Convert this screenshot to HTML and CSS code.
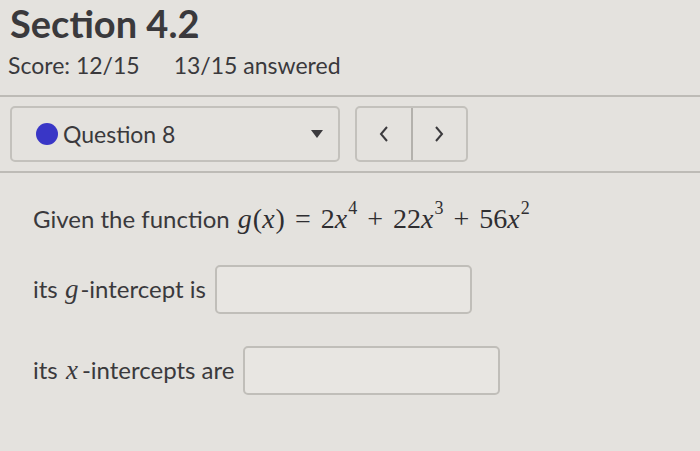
FILE: index.html
```html
<!DOCTYPE html>
<html lang="en">
<head>
    <meta charset="UTF-8">
    <meta name="viewport" content="width=device-width, initial-scale=1.0">
    <title>Section 4.2</title>
    <link rel="stylesheet" href="styles.css">
</head>
<body>
    <div class="header">
        <h1>Section 4.2</h1>
        <div class="score">
            <span>Score: 12/15</span>
            <span>13/15 answered</span>
        </div>
    </div>

    <div class="nav-bar">
        <div class="question-select">
            <span class="dot"></span>
            <span class="q-label">Question 8</span>
            <svg class="caret" width="14" height="10" viewBox="0 0 14 10"><path d="M1 1 L13 1 L7 9 Z" fill="#3b3a3d"/></svg>
        </div>
        <div class="arrows">
            <span class="arrow">
                <svg width="12" height="18" viewBox="0 0 12 18"><path d="M9 2 L3 9 L9 16" fill="none" stroke="#3b3a3d" stroke-width="2"/></svg>
            </span>
            <span class="arrow">
                <svg width="12" height="18" viewBox="0 0 12 18"><path d="M3 2 L9 9 L3 16" fill="none" stroke="#3b3a3d" stroke-width="2"/></svg>
            </span>
        </div>
    </div>

    <div class="question">
        <p class="prompt">Given the function <span class="math"><i>g</i>(<i>x</i>)<span class="op">=</span>2<i>x</i><sup>4</sup><span class="op">+</span>22<i>x</i><sup>3</sup><span class="op">+</span>56<i>x</i><sup>2</sup></span></p>

        <div class="answer-row">
            <span>its <i class="mvar">g</i>-intercept is</span>
            <span class="answer-box"></span>
        </div>

        <div class="answer-row">
            <span>its <i class="mvar wide">x</i>-intercepts are</span>
            <span class="answer-box"></span>
        </div>
    </div>
</body>
</html>
```

FILE: styles.css
```css
body {
    margin: 0;
    font-family: 'Lato', 'Open Sans', sans-serif;
    color: #3a393c;
    background: #e4e2de;
}
.header {
    padding: 0 10px;
    border-bottom: 2px solid #bdbbb6;
    height: 95px;
}
h1 {
    margin: 0;
    padding-top: 2px;
    font-size: 38px;
    font-weight: 700;
    line-height: 42px;
}
.score {
    display: flex;
    gap: 34px;
    font-size: 23px;
    margin-top: 7px;
    margin-left: -2px;
}
.nav-bar {
    display: flex;
    align-items: center;
    gap: 15px;
    padding: 8px 10px;
    height: 58px;
    border-bottom: 2px solid #bdbbb6;
}
.question-select {
    display: flex;
    align-items: center;
    width: 330px;
    height: 56px;
    box-sizing: border-box;
    border: 2px solid #c3c1bc;
    border-radius: 5px;
    padding: 0 14px 0 24px;
    font-size: 23px;
}
.dot {
    width: 22px;
    height: 22px;
    border-radius: 50%;
    background: #3936c6;
    margin-right: 5px;
}
.q-label {
    flex: 1;
}
.arrows {
    display: flex;
    width: 113px;
    height: 56px;
    box-sizing: border-box;
    border: 2px solid #c3c1bc;
    border-radius: 5px;
}
.arrow {
    flex: 1;
    display: flex;
    align-items: center;
    justify-content: center;
}
.arrow + .arrow {
    border-left: 2px solid #b3b1ac;
}
.question {
    padding: 0 33px;
}
.prompt {
    margin: 26px 0 0;
    font-size: 24px;
    line-height: 40px;
}
.math {
    font-family: 'Liberation Serif', 'Times New Roman', serif;
    font-size: 28px;
    color: #2f2e31;
    margin-left: 2px;
}
.math i {
    margin-right: 1px;
}
.math sup {
    font-size: 18px;
    vertical-align: 14px;
    line-height: 0;
}
.op {
    margin: 0 10px;
}
.mvar {
    font-family: 'Liberation Serif', serif;
    font-size: 27px;
    margin: 0 2px 0 1px;
}
.mvar.wide {
    margin: 0 4px 0 2px;
}
.answer-row {
    display: flex;
    align-items: center;
    gap: 9px;
    font-size: 24px;
    margin-top: 26px;
}
.answer-row + .answer-row {
    margin-top: 32px;
}
.answer-box {
    width: 257px;
    height: 49px;
    box-sizing: border-box;
    border: 2px solid #c0beb9;
    border-radius: 5px;
    background: #e8e6e2;
}
```
